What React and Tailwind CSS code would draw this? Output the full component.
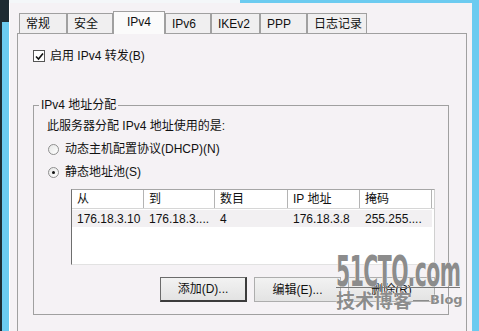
import React from 'react'

const tabs = [
    { label: '常规', w: 'w-[48px]' },
    { label: '安全', w: 'w-[46px]' },
    { label: 'IPv4', w: 'w-[52px]', active: true },
    { label: 'IPv6', w: 'w-[46px]' },
    { label: 'IKEv2', w: 'w-[49px]' },
    { label: 'PPP', w: 'w-[47px]' },
    { label: '日志记录', w: 'w-[60px]' },
]

const columns = [
    { label: '从', w: 'w-[72px]' },
    { label: '到', w: 'w-[71px]' },
    { label: '数目', w: 'w-[73px]' },
    { label: 'IP 地址', w: 'w-[72px]' },
    { label: '掩码', w: 'w-[72px]' },
]

const row = ['176.18.3.10', '176.18.3....', '4', '176.18.3.8', '255.255....']

const Tab = ({ label, w, active }) => (
    <div
        className={`${w} flex items-start border border-[#a0a0a0] ${active
            ? 'h-[23px] -mb-px border-b-0 bg-[#fbfbfb] relative z-10 pt-[3px] justify-center'
            : 'h-[20px] border-b-0 bg-[#f0eff0] pt-[3px] pl-[6px]'
            }`}
    >
        <span className="leading-[14px]">{label}</span>
    </div>
)

const Radio = ({ checked, label }) => (
    <div className="flex items-center h-[16px]">
        <div className="w-[11px] h-[11px] ml-px rounded-full border border-[#8f8f8f] bg-gradient-to-br from-[#e6e6e6] to-white flex items-center justify-center">
            {checked && <div className="w-[3px] h-[3px] rounded-full bg-[#111]" />}
        </div>
        <span className="ml-[6px]">{label}</span>
    </div>
)

const Button = ({ label, primary }) => (
    <button
        type="button"
        className={`w-[87px] h-[25px] flex items-center justify-center bg-gradient-to-b from-[#f2f2f2] to-[#e3e3e3] border ${primary ? 'border-[#6b6b6b] border-r-[#3c3c3c] border-b-[#3c3c3c] border-r-2 border-b-2' : 'border-[#adadad]'
            }`}
    >
        {label}
    </button>
)

const App = () => {
    return (
        <div className="w-[479px] h-[331px] overflow-hidden relative flex flex-col bg-[#6ccbf0] text-[12px] text-[#111] [font-family:'Liberation_Sans','Noto_Sans_CJK_SC',sans-serif]">
            <div className="h-[3px] shrink-0 flex">
                <div className="w-[240px] bg-[#f4f7f9]" />
            </div>

            <div className="flex flex-1 min-h-0">
                {/* left edge of the window behind */}
                <div className="w-[9px] shrink-0 flex flex-col -mt-[3px]">
                    <div className="h-[22px] bg-[#1e2c33]" />
                    <div className="flex flex-1">
                        <div className="w-[2px] bg-[#1e2c33]" />
                        <div className="flex-1 bg-[#6ccbf0]" />
                    </div>
                </div>

                {/* dialog */}
                <div className="w-[463px] shrink-0 bg-[#f5f2f5] border-l border-white pl-[7px] pt-[8px] flex flex-col">
                    <div className="flex items-end h-[22px] ml-[2px]">
                        {tabs.map((t) => (
                            <Tab key={t.label} {...t} />
                        ))}
                    </div>

                    <div className="w-[450px] flex-1 border border-b-0 border-[#a0a0a0] bg-[#f5f2f5] pl-[15px] pt-[16px]">
                        <div className="flex items-center h-[12px]">
                            <div className="w-[12px] h-[12px] border border-[#555] bg-white flex items-center justify-center">
                                <svg width="9" height="9" viewBox="0 0 9 9">
                                    <path d="M1 4.5 L3.5 7 L8 1.5" fill="none" stroke="#111" strokeWidth="1.6" />
                                </svg>
                            </div>
                            <span className="ml-[5px]">启用 IPv4 转发(B)</span>
                        </div>

                        {/* group box */}
                        <div className="relative mt-[43px] w-[416px] h-[210px] border border-[#a0a0a0] pl-[13px]">
                            <span className="absolute -top-[9px] left-[5px] px-[2px] leading-[16px] bg-[#f5f2f5]">
                                IPv4 地址分配
                            </span>

                            <div className="mt-[12px] leading-[16px]">此服务器分配 IPv4 地址使用的是:</div>
                            <div className="mt-[7px]">
                                <Radio label="动态主机配置协议(DHCP)(N)" />
                            </div>
                            <div className="mt-[7px]">
                                <Radio checked label="静态地址池(S)" />
                            </div>

                            {/* list */}
                            <div className="mt-[9px] ml-[24px] w-[364px] h-[76px] bg-white border border-[#a6a6a6] border-l-[#6e6e6e] border-b-[#e2e2e2] border-r-[#d0d0d0]">
                                <div className="flex h-[19px] border-b border-[#d6d6d6]">
                                    {columns.map((c) => (
                                        <div key={c.label} className={`${c.w} border-r border-[#b4b4b4] pl-[5px] flex items-center`}>
                                            {c.label}
                                        </div>
                                    ))}
                                </div>
                                <div className="flex h-[17px] w-[360px] bg-[#f2f0f2] mt-px">
                                    {row.map((v, i) => (
                                        <div key={i} className={`${columns[i].w} pl-[5px] flex items-center`}>
                                            {v}
                                        </div>
                                    ))}
                                </div>
                            </div>

                            <div className="flex gap-[7px] mt-[12px] ml-[113px]">
                                <Button primary label="添加(D)..." />
                                <Button label="编辑(E)..." />
                                <Button label="删除(R)" />
                            </div>
                        </div>
                    </div>
                </div>
            </div>

            {/* watermark */}
            <div className="absolute left-[336px] top-[255px] text-[#8c8c8c] [text-shadow:0_0_1px_#fff,0_0_1px_#fff] pointer-events-none">
                <div className="h-[32px] w-[124px] origin-left scale-x-[0.54] font-black text-[42px] leading-[34px] tracking-[-1px] [font-family:'DejaVu_Sans_Condensed','DejaVu_Sans',sans-serif] whitespace-nowrap">
                    51CTO.com
                </div>
                <div className="h-px w-[124px] bg-[#777]" />
                <div className="flex items-center">
                    <span className="font-bold text-[19px] leading-[24px] [font-family:'Noto_Sans_CJK_SC',sans-serif]">技术博客</span>
                    <span className="w-[16px] h-px bg-[#8c8c8c] ml-px" />
                    <span className="font-bold text-[13px] ml-px [font-family:'DejaVu_Sans',sans-serif]">Blog</span>
                </div>
            </div>
        </div>
    )
}

export default App
